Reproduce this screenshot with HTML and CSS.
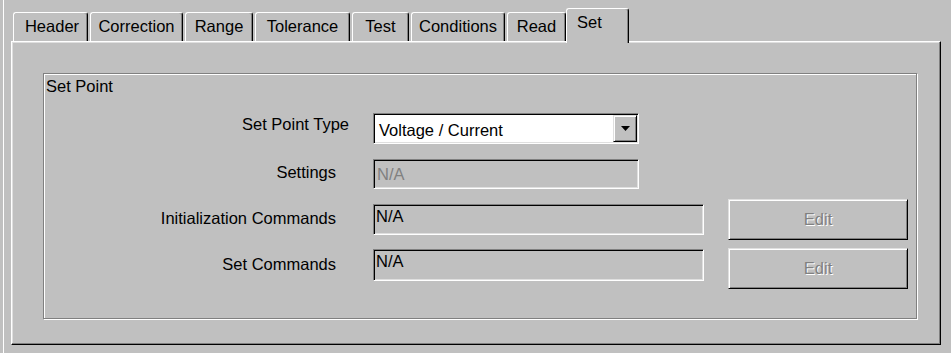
FILE: index.html
```html
<!DOCTYPE html>
<html>
<head>
<meta charset="utf-8">
<title>Set</title>
<link rel="stylesheet" href="styles.css">
</head>
<body>
<div class="window">
  <div class="tabs">
    <div class="tab t-header">Header</div>
    <div class="tab t-correction">Correction</div>
    <div class="tab t-range">Range</div>
    <div class="tab t-tolerance">Tolerance</div>
    <div class="tab t-test">Test</div>
    <div class="tab t-conditions">Conditions</div>
    <div class="tab t-read">Read</div>
    <div class="tab active t-set">Set</div>
  </div>
  <div class="panel">
    <div class="group">
      <div class="group-title">Set Point</div>
      <div class="row row-a">
        <div class="label">Set Point Type</div>
        <div class="combo sunken">
          <span class="combo-text">Voltage / Current</span>
          <span class="combo-btn raised">
            <svg class="arrow" width="9" height="5" viewBox="0 0 9 5"><polygon points="0,0 9,0 4.5,5" fill="#000"/></svg>
          </span>
        </div>
      </div>
      <div class="row row-b">
        <div class="label">Settings</div>
        <div class="field field-short sunken disabled">N/A</div>
      </div>
      <div class="row row-c">
        <div class="label">Initialization Commands</div>
        <div class="field field-long sunken">N/A</div>
        <div class="button raised">Edit</div>
      </div>
      <div class="row row-d">
        <div class="label">Set Commands</div>
        <div class="field field-long sunken">N/A</div>
        <div class="button raised">Edit</div>
      </div>
    </div>
  </div>
</div>
</body>
</html>
```
FILE: styles.css
```css
html, body {
  margin: 0;
  padding: 0;
}
body {
  background: #c0c0c0;
  font-family: "Liberation Sans", Arial, sans-serif;
  font-size: 16.5px;
  line-height: 19px;
  color: #000;
  width: 951px;
  height: 353px;
  overflow: hidden;
}
.window {
  margin-left: 3px;
  border-left: 1px solid #fff;
  padding-left: 7px;
  height: 353px;
  box-sizing: border-box;
}

/* tabs */
.tabs {
  display: flex;
  align-items: flex-end;
  height: 41px;
  padding-left: 2px;
}
.tab {
  box-sizing: border-box;
  height: 29px;
  flex: none;
  margin-right: 2px;
  border-top: 1px solid #fff;
  border-left: 1px solid #fff;
  border-right: 1px solid #000;
  box-shadow: inset -1px 0 0 #808080;
  border-radius: 3px 3px 0 0;
  padding-top: 4px;
  text-align: center;
  white-space: nowrap;
  background: #c0c0c0;
}
.t-header { width: 75px; padding-left: 3px; }
.t-correction { width: 93px; }
.t-range { width: 68px; }
.t-tolerance { width: 95px; }
.t-test { width: 57px; }
.t-conditions { width: 94px; }
.t-read { width: 59px; margin-right: 0; }
.tab.active {
  width: 63px;
  height: 35px;
  margin-bottom: -2px;
  margin-right: 0;
  position: relative;
  z-index: 1;
  text-align: left;
  padding-left: 10px;
  padding-top: 4px;
}

/* panel */
.panel {
  box-sizing: border-box;
  width: 930px;
  height: 304px;
  border-top: 1px solid #fff;
  border-left: 1px solid #fff;
  border-right: 1px solid #000;
  border-bottom: 1px solid #000;
  box-shadow: inset -1px -1px 0 #808080, inset 1px 1px 0 #dfdfdf;
  padding: 31px 0 0 31px;
}

/* group box */
.group {
  box-sizing: border-box;
  width: 874px;
  height: 246px;
  border: 1px solid #808080;
  box-shadow: inset 1px 1px 0 #fff, 1px 1px 0 #fff;
}
.group-title {
  margin-top: 3px;
  padding-left: 2px;
  height: 19px;
}

.row {
  display: flex;
  align-items: flex-start;
}
.label {
  flex: none;
  box-sizing: border-box;
  width: 306px;
  text-align: right;
  white-space: nowrap;
  padding-right: 14px;
}
.row-a { margin-top: 17px; }
.row-a .label { padding-top: 2px; padding-right: 1px; }
.row-b { margin-top: 15px; }
.row-b .label { padding-top: 4px; }
.row-c { margin-top: 10px; }
.row-c .label { padding-top: 10px; }
.row-d { margin-top: 8px; }
.row-d .label { padding-top: 7px; }

/* 3D borders */
.sunken {
  box-sizing: border-box;
  border-top: 1px solid #808080;
  border-left: 1px solid #808080;
  border-right: 1px solid #fff;
  border-bottom: 1px solid #fff;
  box-shadow: inset 1px 1px 0 #000, inset -1px -1px 0 #dfdfdf;
}
.raised {
  box-sizing: border-box;
  border-top: 1px solid #dfdfdf;
  border-left: 1px solid #dfdfdf;
  border-right: 1px solid #000;
  border-bottom: 1px solid #000;
  box-shadow: inset 1px 1px 0 #fff, inset -1px -1px 0 #808080;
  background: #c0c0c0;
}

/* combo */
.combo {
  flex: none;
  margin-left: 23px;
  width: 266px;
  height: 31px;
  background: #fff;
  padding: 1px;
  display: flex;
}
.combo-text {
  flex: 1;
  padding-left: 4px;
  padding-top: 3px;
  line-height: 24px;
  white-space: nowrap;
}
.combo-btn {
  flex: none;
  width: 24px;
  height: 27px;
  display: flex;
  align-items: center;
  justify-content: center;
}
.arrow { display: block; }

/* fields */
.field {
  flex: none;
  margin-left: 23px;
  background: #c0c0c0;
  white-space: nowrap;
}
.field-short {
  width: 266px;
  height: 30px;
  padding: 5px 0 0 3px;
}
.field.disabled { color: #808080; }
.field-long {
  width: 331px;
  height: 31px;
  padding: 2px 0 0 2px;
}
.row-c .field { margin-top: 5px; }
.row-d .field { margin-top: 1px; height: 32px; }

/* buttons */
.button {
  flex: none;
  margin-left: 24px;
  width: 180px;
  height: 41px;
  display: flex;
  align-items: center;
  justify-content: center;
  color: #808080;
  text-shadow: 1px 1px 0 #fff;
}
```
